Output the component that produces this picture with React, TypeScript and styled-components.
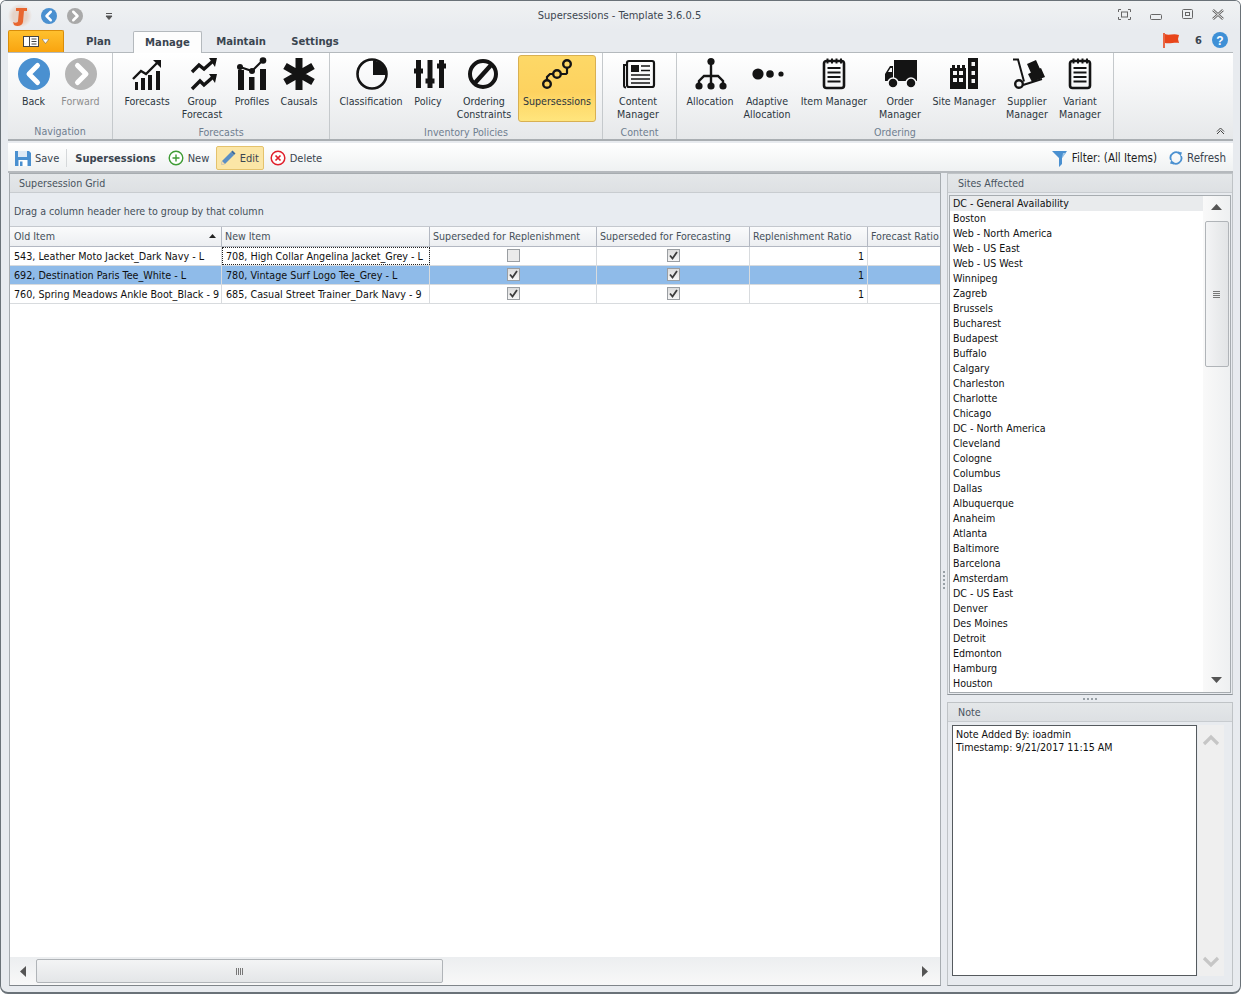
import React from 'react';
import styled, { createGlobalStyle } from 'styled-components';

const GlobalStyle = createGlobalStyle`
  html, body {
    margin: 0;
    padding: 0;
    background: #fff;
  }
  body {
    font-family: "DejaVu Sans", "Liberation Sans", sans-serif;
    font-stretch: condensed;
    font-size: 10.6px;
    color: #1e1e1e;
  }
  * { box-sizing: border-box; }
`;

const Window = styled.div`
  width: 1241px;
  height: 994px;
  border: 1px solid #6a7278;
  border-bottom-width: 2px;
  border-radius: 6px 6px 8px 8px;
  background: #e8ebef;
  display: flex;
  flex-direction: column;
  overflow: hidden;
`;
const TitleBar = styled.div`
  height: 29px;
  flex: none;
  display: grid;
  grid-template-columns: 1fr auto 1fr;
  align-items: center;
  background: linear-gradient(#f0f2f3, #e8ebef);
`;
const QuickBar = styled.div`
  display: flex;
  align-items: center;
  gap: 10px;
  padding-left: 7px;
`;
const Logo = styled.svg`
  margin-right: -1px;
  flex: none;
`;
const QatArrow = styled.svg`
  margin-left: 12px;
`;
const Title = styled.div`
  color: #3c4650;
  font-size: 11px;
  margin-left: -2px;
`;
const WindowControls = styled.div`
  display: flex;
  justify-content: flex-end;
  align-items: center;
  gap: 19px;
  padding: 0 16px 2px 0;
`;
const TabRow = styled.div`
  height: 22px;
  flex: none;
  display: flex;
  align-items: flex-end;
  padding: 0 8px 0 7px;
  position: relative;
  z-index: 1;
`;
const AppButton = styled.div`
  width: 56px;
  height: 22px;
  border: 1px solid #d98d0a;
  border-bottom: none;
  border-radius: 2px 2px 0 0;
  background: linear-gradient(#ffc02e, #f9a40f);
  display: flex;
  align-items: center;
  justify-content: center;
  gap: 3px;
`;
const Tab = styled.div<{ $active?: boolean; $w: number }>`
  width: ${p => p.$w}px;
  height: 22px;
  display: flex;
  align-items: center;
  justify-content: center;
  font-weight: 700;
  font-size: 11.2px;
  color: #3a4550;
  border: 1px solid ${p => (p.$active ? '#b4b9bd' : 'transparent')};
  border-bottom: none;
  border-radius: 2px 2px 0 0;
  background: ${p => (p.$active ? '#fdfdfd' : 'transparent')};
  margin-bottom: ${p => (p.$active ? '-1px' : '0')};
`;
const TabStatus = styled.div`
  margin-left: auto;
  display: flex;
  align-items: center;
  height: 22px;
  padding: 0 4px 2px 0;
  font-weight: 700;
  font-size: 11px;
  color: #3a4550;
`;
const AlertCount = styled.span`
  margin: 0 10px 0 15px;
`;
const Ribbon = styled.div`
  height: 89px;
  flex: none;
  margin: 0 7px;
  display: flex;
  border-top: 1px solid #b4b9bd;
  border-bottom: 2px solid #a9aeb2;
  background: linear-gradient(#ffffff 0%, #f4f5f6 45%, #e6e8ea 100%);
  position: relative;
`;
const RibbonGroupBox = styled.div<{ $w: number; $pad: number }>`
  width: ${p => p.$w}px;
  flex: none;
  border-right: 1px solid #c5c9cc;
  padding: 2px 0 0 ${p => p.$pad}px;
  display: flex;
  flex-direction: column;
`;
const GroupButtons = styled.div`
  display: flex;
  height: 68px;
`;
const GroupLabel = styled.div<{ $pad: number }>`
  text-align: center;
  color: #6f7e90;
  padding-top: 2px;
  height: 16px;
  margin: 2px 0 0 -${p => p.$pad}px;
`;
const RibbonButton = styled.div<{ $w: number; $active?: boolean; $muted?: boolean }>`
  width: ${p => p.$w}px;
  flex: none;
  display: flex;
  flex-direction: column;
  align-items: center;
  text-align: center;
  line-height: 13px;
  color: ${p => (p.$muted ? '#8e8e8e' : '#2c3640')};
  border: 1px solid ${p => (p.$active ? '#d8b052' : 'transparent')};
  border-radius: 3px;
  background: ${p => (p.$active ? 'linear-gradient(#fdd867, #fdd25f 55%, #ffe57d)' : 'none')};
  white-space: pre-line;
`;
const IconSlot = styled.div`
  height: 38px;
  margin-bottom: 1px;
  display: flex;
  align-items: center;
  justify-content: center;
`;
const CollapseCaret = styled.div`
  position: absolute;
  right: 8px;
  bottom: 4px;
  line-height: 0;
`;
const Toolbar = styled.div`
  height: 30px;
  flex: none;
  margin: 2px 7px 0;
  display: flex;
  align-items: center;
  border-bottom: 2px solid #b5b9bd;
  background: linear-gradient(#ffffff, #eff1f2);
  padding: 2px 2px 0;
  color: #3a4550;
  font-size: 11px;
`;
const ToolItem = styled.div<{ $active?: boolean; $w?: number }>`
  display: flex;
  align-items: center;
  gap: 4px;
  height: 24px;
  ${p => (p.$w ? `width: ${p.$w}px;` : '')}
  padding: 0 ${p => (p.$active ? '3px' : '4px')};
  margin-right: ${p => (p.$active ? '1px' : '0')};
  border: 1px solid ${p => (p.$active ? '#e4c26c' : 'transparent')};
  border-radius: 2px;
  background: ${p => (p.$active ? '#fbe6a6' : 'none')};
  white-space: nowrap;
`;
const ToolTitle = styled.div`
  font-weight: 700;
  margin: 0 7px 0 2px;
  padding-left: 8px;
  border-left: 1px solid #d5d8da;
  height: 18px;
  line-height: 20px;
`;
const ToolSpacer = styled.div`
  flex: 1;
`;
const FilterItem = styled(ToolItem)`
  margin-right: 2px;
  color: #1e1e1e;
  font-size: 11.5px;
`;
const RefreshItem = styled(ToolItem)`
  font-size: 11.5px;
`;
const Main = styled.div`
  flex: 1;
  min-height: 0;
  display: flex;
  padding: 0 7px 6px 8px;
`;
const Panel = styled.div`
  border: 1px solid #bfc3c6;
  border-bottom-color: #8e9499;
  display: flex;
  flex-direction: column;
  min-height: 0;
  background: #e8ebef;
`;
const GridPanel = styled(Panel)`
  width: 932px;
  flex: none;
  border-color: #a7acb0;
  border-bottom-color: #7f858a;
`;
const PanelHeader = styled.div<{ $inset?: number }>`
  height: 19px;
  flex: none;
  padding-left: ${p => p.$inset ?? 10}px;
  display: flex;
  align-items: center;
  background: linear-gradient(#e4e7e9, #dde0e3);
  border-bottom: 1px solid #c8ccd0;
  color: #48535e;
`;
const GroupHint = styled.div`
  height: 34px;
  flex: none;
  padding: 12px 0 0 4px;
  color: #45505a;
  background: #e8ecf1;
  border-bottom: 1px solid #c4c8ce;
`;
const GridBody = styled.div`
  flex: 1;
  min-height: 0;
  background: #fff;
  overflow: hidden;
`;
const GridRow = styled.div<{ $selected?: boolean; $head?: boolean }>`
  display: grid;
  grid-template-columns: 212px 208px 167px 153px 118px 80px;
  height: ${p => (p.$head ? '20px' : '19px')};
  background: ${p => (p.$selected ? '#8fbbe9' : p.$head ? 'linear-gradient(#fafbfc, #eceef1)' : '#fff')};
  border-bottom: 1px solid ${p => (p.$head ? '#b3b8c2' : '#d8dbde')};
  white-space: nowrap;
`;
const HeadCell = styled.div`
  display: flex;
  align-items: center;
  justify-content: space-between;
  padding: 0 5px 2px 4px;
  border-right: 1px solid #b3b8c2;
  color: #45505a;
  overflow: hidden;
  & + & {
    padding-left: 3px;
  }
`;
const Cell = styled.div<{ $align?: string; $focus?: boolean }>`
  display: flex;
  align-items: center;
  justify-content: ${p => p.$align || 'flex-start'};
  padding: 0 3px 0 4px;
  border-right: 1px solid #d8dbde;
  color: #101010;
  font-size: 10.7px;
  overflow: hidden;
  outline: ${p => (p.$focus ? '1px dotted #222' : 'none')};
  outline-offset: -1px;
`;
const CheckBox = styled.div<{ $checked?: boolean }>`
  width: 13px;
  height: 13px;
  margin-bottom: 2px;
  border: 1px solid #9a9ea2;
  background: ${p => (p.$checked ? 'linear-gradient(#dcdcdc, #f6f6f6)' : '#ebebeb')};
  display: flex;
  align-items: center;
  justify-content: center;
  line-height: 0;
`;
const HScroll = styled.div`
  height: 28px;
  flex: none;
  display: flex;
  align-items: center;
  background: linear-gradient(#eceef0, #f8f8f8);
  padding: 0 10px 0 8px;
`;
const HThumb = styled.div`
  width: 407px;
  height: 24px;
  margin-left: 7px;
  border: 1px solid #b0b4b8;
  border-radius: 2px;
  background: linear-gradient(#f3f4f5, #e4e6e8);
  display: flex;
  align-items: center;
  justify-content: center;
  line-height: 0;
`;
const ArrowSpacer = styled.div`
  flex: 1;
`;
const Splitter = styled.div<{ $h?: boolean }>`
  flex: none;
  display: flex;
  flex-direction: ${p => (p.$h ? 'row' : 'column')};
  align-items: center;
  justify-content: center;
  gap: 2px;
  ${p => (p.$h ? 'height: 7px;' : 'width: 6px;')}
`;
const Grip = styled.i`
  width: 2px;
  height: 2px;
  background: #98a0a6;
`;
const SideColumn = styled.div`
  flex: 1;
  min-width: 0;
  display: flex;
  flex-direction: column;
`;
const SitesPanel = styled(Panel)`
  height: 522px;
  flex: none;
`;
const NotePanel = styled(Panel)`
  flex: 1;
`;
const SitesBody = styled.div`
  flex: 1;
  min-height: 0;
  margin: 2px 1px 1px;
  border: 1px solid #a7acb0;
  display: flex;
  background: #fff;
  overflow: hidden;
`;
const SiteList = styled.div`
  flex: 1;
  min-width: 0;
  overflow: hidden;
`;
const SiteRow = styled.div<{ $first?: boolean }>`
  height: 15px;
  line-height: 15px;
  padding-left: 3px;
  color: #101010;
  white-space: nowrap;
  background: ${p => (p.$first ? '#e9ebed' : '#fff')};
`;
const VScroll = styled.div`
  width: 27px;
  flex: none;
  display: flex;
  flex-direction: column;
  align-items: center;
  background: linear-gradient(90deg, #f9f9f9, #eef0f1);
  padding: 6px 0 7px;
`;
const VThumb = styled.div`
  width: 24px;
  height: 146px;
  margin-top: 8px;
  border: 1px solid #b0b4b8;
  border-radius: 2px;
  background: linear-gradient(90deg, #f3f4f5, #e2e4e6);
  display: flex;
  align-items: center;
  justify-content: center;
  line-height: 0;
`;
const NoteBody = styled.div`
  flex: 1;
  min-height: 0;
  display: flex;
  padding: 3px 3px 9px 4px;
`;
const NoteText = styled.div`
  width: 245px;
  flex: none;
  border: 1px solid #555a5e;
  background: #fff;
  padding: 2px 3px;
  line-height: 13px;
  color: #101010;
`;
const NoteScroll = styled.div`
  flex: 1;
  margin: 0 5px 0 1px;
  display: flex;
  flex-direction: column;
  align-items: center;
  justify-content: space-between;
  padding: 9px 0 8px;
  background: #efefef;
`;

const Svg: React.FC<{ children: React.ReactNode }> = ({ children }) => (
  <svg width={36} height={36} viewBox="0 0 36 36" fill="none">
    {children}
  </svg>
);

const INK = '#141414';

const NavGlyph = ({ color, dir }: { color: string; dir: 'l' | 'r' }) => (
  <>
    <circle cx="16" cy="16" r="16" fill={color} />
    <path d={dir === 'l' ? 'M19.5 7.5 11 16l8.5 8.5' : 'M12.5 7.5 21 16l-8.5 8.5'} stroke="#fff" strokeWidth="5" fill="none" strokeLinecap="round" strokeLinejoin="round" />
  </>
);

const SmallNav = ({ color, dir }: { color: string; dir: 'l' | 'r' }) => (
  <svg width={16} height={16} viewBox="0 0 32 32">
    <NavGlyph color={color} dir={dir} />
  </svg>
);

const BigNav = ({ color, dir }: { color: string; dir: 'l' | 'r' }) => (
  <Svg>
    <g transform="translate(2 1)">
      <NavGlyph color={color} dir={dir} />
    </g>
  </Svg>
);

const Notepad = () => (
  <Svg>
    <rect x="8" y="4" width="20" height="27" rx="2.5" stroke={INK} strokeWidth="2.6" />
    <path d="M11.5 1.5v5M16 1.5v5M20.5 1.5v5M25 1.5v5" stroke={INK} strokeWidth="2" />
    <path d="M11.5 11h13M11.5 15.500h13M11.500 20h13M11.500 24.500h13" stroke={INK} strokeWidth="2" />
  </Svg>
);

const ribbonIcons: Record<string, React.ReactNode> = {
  back: <BigNav color="#4a90d0" dir="l" />,
  forward: <BigNav color="#b5b5b5" dir="r" />,
  forecasts: (
    <Svg>
      <path d="M6 33v-8h3v8zM12 33V21h4v12zM19 33V18h4v15zM27 33V14h4v19z" fill={INK} />
      <path d="M4 22 12 14l5 3L28 6" stroke={INK} strokeWidth="2.4" />
      <path d="M24 3h8v8z" fill={INK} />
    </Svg>
  ),
  group: (
    <Svg>
      <path d="M8 15l7-7 5 4 9-8M8 32l8-8 4 4 9-8" stroke={INK} strokeWidth="3.400" />
      <path d="M25 1h8l-2 9zM25 17h8l-2 9z" fill={INK} />
    </Svg>
  ),
  profiles: (
    <Svg>
      <path d="M4 33V13h6v20zM15 33V20h5.500v13zM26 33V12h6v21z" fill={INK} />
      <path d="M6 10l12 4L29 3" stroke={INK} strokeWidth="2" />
      <circle cx="6" cy="10" r="3" fill={INK} />
      <circle cx="18" cy="14" r="3" fill={INK} />
      <circle cx="29" cy="3.500" r="3.300" fill={INK} />
    </Svg>
  ),
  causals: (
    <Svg>
      <path d="M18 1v32M4 9l28 16M32 9 4 25" stroke={INK} strokeWidth="7" />
    </Svg>
  ),
  classification: (
    <Svg>
      <circle cx="19" cy="17" r="14.500" stroke={INK} strokeWidth="2.600" />
      <path d="M20 3.500A14 14 0 0 1 33 18H20z" fill={INK} />
    </Svg>
  ),
  policy: (
    <Svg>
      <path d="M8.500 3v28M20 3v28M31.500 3v28" stroke={INK} strokeWidth="5" />
      <path d="M4 14h9M15.500 24h9M27 9h9" stroke={INK} strokeWidth="5" />
    </Svg>
  ),
  ordering: (
    <Svg>
      <circle cx="17" cy="17" r="13" stroke={INK} strokeWidth="4" />
      <path d="M26 7 8 27" stroke={INK} strokeWidth="4.400" />
    </Svg>
  ),
  supersessions: (
    <Svg>
      <path d="M8 23v-3l3-3h3M22 17h5l1-1v-5" stroke={INK} strokeWidth="2.200" />
      <circle cx="8" cy="27" r="3.800" stroke={INK} strokeWidth="2.400" />
      <circle cx="18" cy="17" r="3.800" stroke={INK} strokeWidth="2.400" />
      <circle cx="28" cy="7" r="3.800" stroke={INK} strokeWidth="2.400" />
    </Svg>
  ),
  content: (
    <Svg>
      <rect x="7" y="4" width="27" height="26" rx="2" stroke={INK} strokeWidth="2.200" />
      <path d="M7 8H4v20.500a2 2 0 0 0 2 2" stroke={INK} strokeWidth="2" />
      <rect x="11" y="8" width="8" height="7" fill={INK} />
      <path d="M21 9h9M21 13.500h9M11 18h19M11 22h19M11 26h19" stroke={INK} strokeWidth="1.700" />
    </Svg>
  ),
  allocation: (
    <Svg>
      <path d="M19 4v25M7 29v-5l5-5h14l5 5v5" stroke={INK} strokeWidth="2.400" />
      <circle cx="19" cy="4.500" r="3.600" fill={INK} />
      <circle cx="7" cy="29" r="3.600" fill={INK} />
      <circle cx="19" cy="29" r="3.600" fill={INK} />
      <circle cx="31" cy="29" r="3.600" fill={INK} />
    </Svg>
  ),
  adaptive: (
    <Svg>
      <circle cx="9" cy="17" r="5.600" fill={INK} />
      <circle cx="21" cy="17" r="3.800" fill={INK} />
      <circle cx="32" cy="17" r="2.600" fill={INK} />
    </Svg>
  ),
  item: <Notepad />,
  order: (
    <Svg>
      <path d="M12 3h23v21H12zM3 24v-7l5-8h3v15z" fill={INK} />
      <path d="M6 15l2.500-4H10v4z" fill="#f7f7f8" />
      <circle cx="11" cy="26" r="5" fill={INK} stroke="#f6f6f7" strokeWidth="1.500" />
      <circle cx="29" cy="26" r="5" fill={INK} stroke="#f6f6f7" strokeWidth="1.500" />
    </Svg>
  ),
  site: (
    <Svg>
      <path d="M4 32V11h2V8h3v3h2V8h3v3h2V8h3v3h1v21zM22 32V1h10v31z" fill={INK} />
      <path d="M7 14h4v4H7zM13 14h4v4h-4zM7 21h4v4H7zM13 21h4v4h-4zM25.500 5h3.500v4h-3.500zM25.500 14h3.500v4h-3.500zM25.500 22h3.500v4h-3.500z" fill="#f5f5f6" />
    </Svg>
  ),
  supplier: (
    <Svg>
      <path d="M4 2.500h5l6 22M14 28l19-6" stroke={INK} strokeWidth="2" />
      <circle cx="10" cy="27" r="3.800" stroke={INK} strokeWidth="2.400" />
      <path d="M18 7l9-4 4 9-9 4zM19 17l13-6 4 9-13 5z" fill={INK} />
    </Svg>
  ),
  variant: <Notepad />,
};

type RibbonItem = { key: string; label: string; w: number; active?: boolean; muted?: boolean };
type RibbonGroupData = { label: string; w: number; pad: number; items: RibbonItem[] };

const groups: RibbonGroupData[] = [
  {
    label: 'Navigation', w: 105, pad: 2,
    items: [
      { key: 'back', label: 'Back', w: 47 },
      { key: 'forward', label: 'Forward', w: 47, muted: true },
    ],
  },
  {
    label: 'Forecasts', w: 217, pad: 7,
    items: [
      { key: 'forecasts', label: 'Forecasts', w: 54 },
      { key: 'group', label: 'Group\nForecast', w: 56 },
      { key: 'profiles', label: 'Profiles', w: 44 },
      { key: 'causals', label: 'Causals', w: 50 },
    ],
  },
  {
    label: 'Inventory Policies', w: 273, pad: 6,
    items: [
      { key: 'classification', label: 'Classification', w: 70 },
      { key: 'policy', label: 'Policy', w: 44 },
      { key: 'ordering', label: 'Ordering\nConstraints', w: 68 },
      { key: 'supersessions', label: 'Supersessions', w: 78, active: true },
    ],
  },
  {
    label: 'Content', w: 74, pad: 7,
    items: [{ key: 'content', label: 'Content\nManager', w: 56 }],
  },
  {
    label: 'Ordering', w: 437, pad: 7,
    items: [
      { key: 'allocation', label: 'Allocation', w: 52 },
      { key: 'adaptive', label: 'Adaptive\nAllocation', w: 62 },
      { key: 'item', label: 'Item Manager', w: 72 },
      { key: 'order', label: 'Order\nManager', w: 60 },
      { key: 'site', label: 'Site Manager', w: 68 },
      { key: 'supplier', label: 'Supplier\nManager', w: 58 },
      { key: 'variant', label: 'Variant\nManager', w: 48 },
    ],
  },
];

const sites = [
  'DC - General Availability', 'Boston', 'Web - North America', 'Web - US East', 'Web - US West', 'Winnipeg', 'Zagreb',
  'Brussels', 'Bucharest', 'Budapest', 'Buffalo', 'Calgary', 'Charleston', 'Charlotte', 'Chicago', 'DC - North America',
  'Cleveland', 'Cologne', 'Columbus', 'Dallas', 'Albuquerque', 'Anaheim', 'Atlanta', 'Baltimore', 'Barcelona', 'Amsterdam',
  'DC - US East', 'Denver', 'Des Moines', 'Detroit', 'Edmonton', 'Hamburg', 'Houston',
];

const rows = [
  { oldItem: '543, Leather Moto Jacket_Dark Navy - L', newItem: '708, High Collar Angelina Jacket_Grey - L', rep: false, fc: true, focus: true },
  { oldItem: '692, Destination Paris Tee_White - L', newItem: '780, Vintage Surf Logo Tee_Grey - L', rep: true, fc: true, selected: true },
  { oldItem: '760, Spring Meadows Ankle Boot_Black - 9', newItem: '685, Casual Street Trainer_Dark Navy - 9', rep: true, fc: true },
];

const Check = ({ on }: { on: boolean }) => (
  <CheckBox $checked={on}>
    {on && (
      <svg width="9" height="9" viewBox="0 0 9 9">
        <path d="M1 4.500 3.500 7.500 8 1" stroke="#3c3c3c" strokeWidth="1.800" fill="none" />
      </svg>
    )}
  </CheckBox>
);

const Tri = ({ d }: { d: 'u' | 'd' | 'l' | 'r' }) => {
  const pts = { u: '5.500,2 11,8 0,8', d: '0,3 11,3 5.500,9', l: '8,0 8,11 2,5.500', r: '3,0 3,11 9,5.500' }[d];
  return (
    <svg width={11} height={11} viewBox="0 0 11 11">
      <polygon points={pts} fill="#555" />
    </svg>
  );
};

const Bars = ({ vertical }: { vertical?: boolean }) => (
  <svg width="9" height="9" viewBox="0 0 9 9">
    <path d={vertical ? 'M1.500 1v7M3.500 1v7M5.500 1v7M7.500 1v7' : 'M1 1.500h7M1 3.500h7M1 5.500h7M1 7.500h7'} stroke="#777" />
  </svg>
);

const SmallChevron = ({ up }: { up?: boolean }) => (
  <svg width="18" height="12" viewBox="0 0 18 12">
    <path d={up ? 'M2 10 9 3l7 7' : 'M2 2l7 7 7-7'} stroke="#c6c6c6" strokeWidth="3.200" fill="none" />
  </svg>
);

export default function App() {
  return (
    <>
      <GlobalStyle />
      <Window>
        <TitleBar>
          <QuickBar>
            <Logo width="24" height="26" viewBox="0 0 24 26">
              <defs>
                <radialGradient id="logoGlow">
                  <stop offset="0.6" stopColor="#e6d3c8" />
                  <stop offset="1" stopColor="#eceef0" />
                </radialGradient>
              </defs>
              <circle cx="12" cy="13" r="12" fill="url(#logoGlow)" />
              <path d="M8 5h11v3h-3l-1 11c-.5 4-6 5-9 3l-1-3c2 1 5 1 5-1l1-10H8z" fill="#e8662f" />
            </Logo>
            <SmallNav color="#4a90d0" dir="l" />
            <SmallNav color="#a9a9a9" dir="r" />
            <QatArrow width="8" height="8" viewBox="0 0 8 8">
              <path d="M1 1.500h6M1 4h6l-3 3.500z" stroke="#555" fill="#555" strokeWidth="1" />
            </QatArrow>
          </QuickBar>
          <Title>Supersessions - Template 3.6.0.5</Title>
          <WindowControls>
            <svg width="13" height="11" viewBox="0 0 13 11">
              <path d="M.500 3V.500H3M10 .500h2.500V3M.500 8v2.500H3M10 10.500h2.500V8" stroke="#666" fill="none" />
              <rect x="3.500" y="3" width="6" height="5" stroke="#666" fill="none" />
            </svg>
            <svg width="13" height="11" viewBox="0 0 13 11">
              <rect x=".500" y="5.500" width="11" height="5" rx="1" stroke="#666" fill="none" />
            </svg>
            <svg width="11" height="11" viewBox="0 0 11 11">
              <rect x=".500" y=".500" width="10" height="9" rx="1" stroke="#666" fill="none" />
              <rect x="3.500" y="3.500" width="4" height="3" stroke="#666" fill="none" />
            </svg>
            <svg width="12" height="11" viewBox="0 0 12 11">
              <path d="M1 1l10 9M11 1 1 10" stroke="#666" strokeWidth="2.400" />
              <path d="M1 1l10 9M11 1 1 10" stroke="#eee" strokeWidth="1" />
            </svg>
          </WindowControls>
        </TitleBar>

        <TabRow>
          <AppButton>
            <svg width="16" height="11" viewBox="0 0 16 11">
              <rect x=".500" y=".500" width="15" height="10" fill="#fff" stroke="#444" />
              <path d="M6.500 1v9M8.500 3h5M8.500 5.500h5M8.500 8h5" stroke="#444" />
            </svg>
            <svg width="7" height="5" viewBox="0 0 7 5">
              <path d="M0 0h7L3.500 4.500z" fill="#fff" stroke="#555" strokeWidth=".5" />
            </svg>
          </AppButton>
          <Tab $w={69}>Plan</Tab>
          <Tab $w={69} $active>Manage</Tab>
          <Tab $w={78}>Maintain</Tab>
          <Tab $w={70}>Settings</Tab>
          <TabStatus>
            <svg width="17" height="15" viewBox="0 0 17 15">
              <path d="M1 0v15" stroke="#e8451a" strokeWidth="1.600" />
              <path d="M2 1c4 2 8-1 14 1l-1 4 1 4c-4-1-9 1-14 0z" fill="#e8451a" />
            </svg>
            <AlertCount>6</AlertCount>
            <svg width="16" height="16" viewBox="0 0 16 16">
              <circle cx="8" cy="8" r="8" fill="#3f90d6" />
              <text x="8" y="12.500" textAnchor="middle" fontSize="12" fontWeight="700" fill="#fff" fontFamily="Liberation Sans">?</text>
            </svg>
          </TabStatus>
        </TabRow>

        <Ribbon>
          {groups.map(g => (
            <RibbonGroupBox key={g.label} $w={g.w} $pad={g.pad}>
              <GroupButtons>
                {g.items.map(it => (
                  <RibbonButton key={it.key} $w={it.w} $active={it.active} $muted={it.muted}>
                    <IconSlot>{ribbonIcons[it.key]}</IconSlot>
                    {it.label}
                  </RibbonButton>
                ))}
              </GroupButtons>
              <GroupLabel $pad={g.pad}>{g.label}</GroupLabel>
            </RibbonGroupBox>
          ))}
          <CollapseCaret>
            <svg width="9" height="7" viewBox="0 0 9 7">
              <path d="M1 6l3.500-3.500L8 6M1 3.500 4.500 0 8 3.500" stroke="#444" fill="none" />
            </svg>
          </CollapseCaret>
        </Ribbon>

        <Toolbar>
          <ToolItem>
            <svg width="16" height="16" viewBox="0 0 16 16">
              <path d="M0 1h14l2 2v13H0z" fill="#4a90d0" />
              <rect x="3" y="1" width="9" height="6" fill="#dfeaf5" />
              <rect x="3.500" y="10" width="9" height="6" fill="#fff" />
              <rect x="5" y="11.500" width="2.500" height="4.500" fill="#4a90d0" />
            </svg>
            Save
          </ToolItem>
          <ToolTitle>Supersessions</ToolTitle>
          <ToolItem $w={53}>
            <svg width="16" height="16" viewBox="0 0 16 16">
              <circle cx="8" cy="8" r="6.800" fill="#fff" stroke="#3f9c35" strokeWidth="1.400" />
              <path d="M8 4.500v7M4.500 8h7" stroke="#3f9c35" strokeWidth="1.400" />
            </svg>
            New
          </ToolItem>
          <ToolItem $active $w={48}>
            <svg width="16" height="16" viewBox="0 0 16 16">
              <path d="M1 15l1-4L11 2l3 3-9 9z" fill="#5b8fc4" />
              <path d="M1 15l1-4 3 3z" fill="#f4d9a8" />
              <path d="M11 2l1.500-1.500 3 3L14 5z" fill="#3d6c9e" />
            </svg>
            Edit
          </ToolItem>
          <ToolItem>
            <svg width="16" height="16" viewBox="0 0 16 16">
              <circle cx="8" cy="8" r="6.800" fill="#fff" stroke="#e0202c" strokeWidth="1.500" />
              <path d="M5.500 5.500l5 5M10.500 5.500l-5 5" stroke="#e0202c" strokeWidth="1.700" />
            </svg>
            Delete
          </ToolItem>
          <ToolSpacer />
          <FilterItem>
            <svg width="16" height="17" viewBox="0 0 16 17">
              <path d="M0 1h15L10 8v6l-3 3V8z" fill="#4a90d0" />
              <path d="M11 3h3L10 8z" fill="#9cc6e8" />
            </svg>
            Filter: (All Items)
          </FilterItem>
          <RefreshItem>
            <svg width="14" height="14" viewBox="0 0 14 14">
              <path d="M2 9A5.500 5.500 0 0 1 11 3M12 5a5.500 5.500 0 0 1-9 6" stroke="#4a90d0" strokeWidth="1.800" fill="none" />
              <path d="M9 .500 13 1.500 11.500 5.500zM5 13.500 1 12.500 2.500 8.500z" fill="#4a90d0" />
            </svg>
            Refresh
          </RefreshItem>
        </Toolbar>

        <Main>
          <GridPanel>
            <PanelHeader $inset={9}>Supersession Grid</PanelHeader>
            <GroupHint>Drag a column header here to group by that column</GroupHint>
            <GridBody>
              <GridRow $head>
                <HeadCell>
                  Old Item
                  <svg width="7" height="4" viewBox="0 0 7 4"><path d="M3.500 0 7 4H0z" fill="#222" /></svg>
                </HeadCell>
                <HeadCell>New Item</HeadCell>
                <HeadCell>Superseded for Replenishment</HeadCell>
                <HeadCell>Superseded for Forecasting</HeadCell>
                <HeadCell>Replenishment Ratio</HeadCell>
                <HeadCell>Forecast Ratio</HeadCell>
              </GridRow>
              {rows.map(r => (
                <GridRow key={r.oldItem} $selected={r.selected}>
                  <Cell>{r.oldItem}</Cell>
                  <Cell $focus={r.focus}>{r.newItem}</Cell>
                  <Cell $align="center"><Check on={r.rep} /></Cell>
                  <Cell $align="center"><Check on={r.fc} /></Cell>
                  <Cell $align="flex-end">1</Cell>
                  <Cell />
                </GridRow>
              ))}
            </GridBody>
            <HScroll>
              <Tri d="l" />
              <HThumb><Bars vertical /></HThumb>
              <ArrowSpacer />
              <Tri d="r" />
            </HScroll>
          </GridPanel>

          <Splitter>
            <Grip /><Grip /><Grip /><Grip /><Grip />
          </Splitter>

          <SideColumn>
            <SitesPanel>
              <PanelHeader>Sites Affected</PanelHeader>
              <SitesBody>
                <SiteList>
                  {sites.map((s, i) => (
                    <SiteRow key={s} $first={i === 0}>{s}</SiteRow>
                  ))}
                </SiteList>
                <VScroll>
                  <Tri d="u" />
                  <VThumb><Bars /></VThumb>
                  <ArrowSpacer />
                  <Tri d="d" />
                </VScroll>
              </SitesBody>
            </SitesPanel>
            <Splitter $h>
              <Grip /><Grip /><Grip /><Grip />
            </Splitter>
            <NotePanel>
              <PanelHeader>Note</PanelHeader>
              <NoteBody>
                <NoteText>
                  Note Added By: ioadmin
                  <br />
                  Timestamp: 9/21/2017 11:15 AM
                </NoteText>
                <NoteScroll>
                  <SmallChevron up />
                  <SmallChevron />
                </NoteScroll>
              </NoteBody>
            </NotePanel>
          </SideColumn>
        </Main>
      </Window>
    </>
  );
}
